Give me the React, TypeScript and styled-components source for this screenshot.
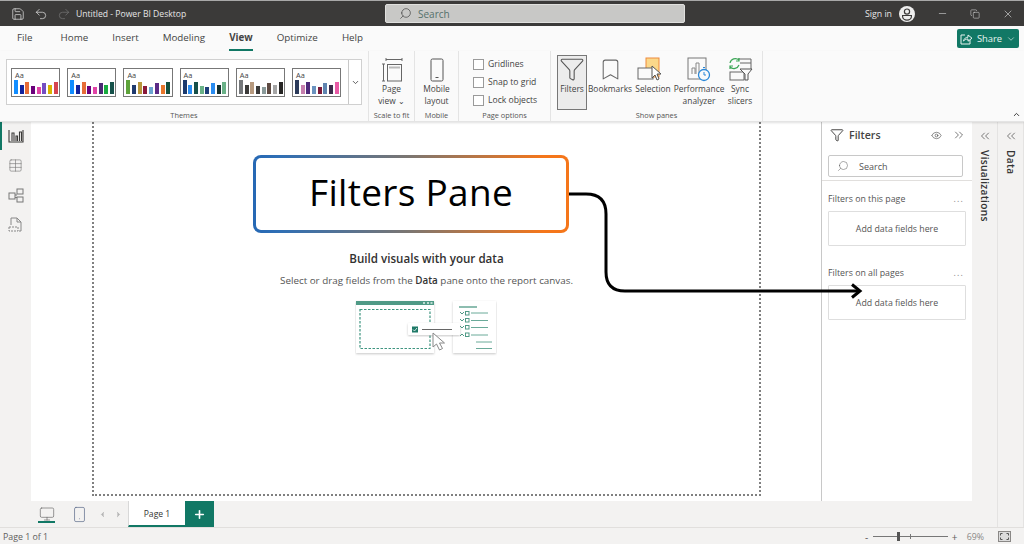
import React from 'react';
import styled, { createGlobalStyle } from 'styled-components';
import { Save, Undo2, Redo2, Search, Minus, Copy, X, ChevronDown, ChevronUp, ChevronsLeft, ChevronsRight, Eye, ChevronLeft, ChevronRight, Plus, Bookmark, Filter, Monitor, Smartphone, Table } from 'lucide-react';

const GlobalStyle = createGlobalStyle`
  html, body {
    margin: 0;
    height: 544px;
    overflow: hidden;
    background: #fff;
    font-family: "Open Sans", "Noto Sans", sans-serif;
    color: #323130;
  }
  * { box-sizing: border-box; }
`;

const Shell = styled.div`
  position: relative;
  width: 1024px;
  height: 544px;
  display: flex;
  flex-direction: column;
  overflow: hidden;
`;

// Barra de titulo
const TitleBar = styled.div`
  height: 26px;
  flex: none;
  background: #3b3a39;
  border-top: 1px solid #a8a8a8;
  display: flex;
  align-items: center;
  padding-left: 11px;
  color: #e6e6e6;
`;

const QuickIcons = styled.div`
  display: flex;
  align-items: center;
  gap: 9px;
  width: 65px;
`;

const AppTitle = styled.div`
  font-size: 8.6px;
  width: 309px;
  white-space: nowrap;
`;

const SearchBar = styled.div`
  width: 300px;
  height: 19px;
  background: #c8c8c6;
  border: 1px solid #e0e0de;
  border-radius: 2px;
  display: flex;
  align-items: center;
  gap: 6px;
  padding-left: 13px;
  font-size: 10px;
  color: #55706b;
`;

const SignIn = styled.div`
  margin-left: auto;
  display: flex;
  align-items: center;
  gap: 7px;
  font-size: 8.8px;
  margin-right: 22px;
`;

const WindowButtons = styled.div`
  display: flex;
  align-items: center;
  gap: 22px;
  margin-right: 10px;
`;

// Pestanas
const TabRow = styled.div`
  height: 25px;
  flex: none;
  background: #fafafa;
  display: flex;
  align-items: center;
  padding: 0 5px 0 17px;
`;

const Tab = styled.div<{ $active?: boolean; $gap?: number }>`
  font-size: 9.8px;
  margin-right: ${p => p.$gap ?? 24}px;
  height: 25px;
  line-height: 24px;
  color: #444;
  font-weight: ${p => (p.$active ? 700 : 400)};
  border-bottom: 2px solid ${p => (p.$active ? '#117865' : 'transparent')};
`;

const ShareButton = styled.div`
  margin-left: auto;
  width: 62px;
  height: 19px;
  background: #117865;
  border-radius: 2px;
  color: #e8f3f0;
  font-size: 9.4px;
  display: flex;
  align-items: center;
  justify-content: center;
  gap: 4px;
`;

// Cinta
const Ribbon = styled.div`
  position: relative;
  height: 71px;
  flex: none;
  background: #fafafa;
  border-bottom: 1px solid #e4e4e4;
  box-shadow: 0 1px 2px rgba(0, 0, 0, 0.12);
  display: flex;
  z-index: 1;
`;

const Group = styled.div<{ $w: number }>`
  width: ${p => p.$w}px;
  flex: none;
  display: flex;
  flex-direction: column;
  align-items: center;
  border-right: 1px solid #e4e4e4;
`;

const GroupBody = styled.div`
  flex: 1;
  min-height: 0;
  width: 100%;
  display: flex;
  justify-content: center;
`;

const GroupLabel = styled.div`
  font-size: 7.4px;
  line-height: 11px;
  color: #555;
  white-space: nowrap;
`;

const Gallery = styled.div`
  width: 356px;
  height: 46px;
  margin-top: 8px;
  border: 1px solid #d0d0d0;
  background: #fff;
  display: flex;
  align-items: center;
  padding-left: 4px;
  gap: 7px;
`;

const ThemeThumb = styled.div`
  width: 50px;
  height: 29px;
  border: 1px solid #777;
  background: #fff;
  padding: 2px 2px 0 3px;
  position: relative;
`;

const ThumbLabel = styled.div`
  font-size: 7.4px;
  line-height: 8px;
  color: #444;
`;

const Bars = styled.div`
  position: absolute;
  left: 2px;
  bottom: 2px;
  display: flex;
  align-items: flex-end;
  gap: 1.7px;
`;

const Bar = styled.div<{ $h: number; $c: string }>`
  width: 4px;
  height: ${p => p.$h}px;
  background: ${p => p.$c};
`;

const GalleryMore = styled.div`
  margin-left: auto;
  width: 13px;
  height: 100%;
  border-left: 1px solid #c8c8c8;
  display: flex;
  align-items: center;
  justify-content: center;
  color: #555;
`;

const RibbonButton = styled.div<{ $w: number; $pressed?: boolean }>`
  width: ${p => p.$w}px;
  height: 55px;
  margin-top: 4px;
  display: flex;
  flex-direction: column;
  align-items: center;
  font-size: 8.4px;
  line-height: 12px;
  color: #444;
  text-align: center;
  white-space: nowrap;
  background: ${p => (p.$pressed ? '#ececec' : 'transparent')};
  border: 1px solid ${p => (p.$pressed ? '#777' : 'transparent')};
`;

const IconSlot = styled.div`
  height: 26px;
  margin-bottom: 1px;
  display: flex;
  align-items: flex-end;
  justify-content: center;
`;

const CheckList = styled.div`
  display: flex;
  flex-direction: column;
  gap: 6px;
  padding: 7px 0 0 14px;
  width: 100%;
`;

const CheckRow = styled.div`
  display: flex;
  align-items: center;
  gap: 4px;
  font-size: 8.6px;
  height: 12px;
  color: #444;
`;

const CheckBox = styled.div`
  width: 11px;
  height: 11px;
  border: 1px solid #9a9a9a;
  background: #fff;
`;

const ButtonRow = styled.div`
  display: flex;
  padding-left: 6px;
  width: 100%;
`;

const Collapse = styled.div`
  position: absolute;
  right: 3px;
  bottom: 2px;
  color: #333;
  display: flex;
`;

// Area principal
const Main = styled.div`
  flex: 1;
  display: flex;
  min-height: 0;
`;

const CenterColumn = styled.div`
  width: 972px;
  display: flex;
  flex-direction: column;
`;

const WorkRow = styled.div`
  flex: 1;
  display: flex;
  min-height: 0;
`;

const Rail = styled.div`
  width: 31px;
  flex: none;
  background: #f3f2f1;
  display: flex;
  flex-direction: column;
  align-items: center;
`;

const RailItem = styled.div<{ $active?: boolean }>`
  width: 100%;
  height: ${p => (p.$active ? 28 : 30)}px;
  display: flex;
  align-items: center;
  justify-content: center;
  color: ${p => (p.$active ? '#3b3a39' : '#777')};
  border-left: 2.5px solid ${p => (p.$active ? '#117865' : 'transparent')};
  padding-right: 2px;
`;

const Canvas = styled.div`
  width: 790px;
  flex: none;
  padding: 0 60px 5px 61px;
  background: #fff;
`;

const ReportPage = styled.div`
  height: 100%;
  border: 2px dotted #808080;
  border-top: none;
  display: flex;
  flex-direction: column;
  align-items: center;
  padding-top: 33px;
`;

const Callout = styled.div`
  width: 316px;
  height: 78px;
  margin-right: 31px;
  padding-bottom: 6px;
  border: 3px solid transparent;
  border-radius: 8px;
  background: linear-gradient(#fff, #fff) padding-box,
    linear-gradient(90deg, #2668b4, #2f6fb5 8%, #7d7670 50%, #f5761a 92%, #f5761a) border-box;
  font-size: 37px;
  color: #000;
  display: flex;
  align-items: center;
  justify-content: center;
  letter-spacing: 0.3px;
`;

const EmptyTitle = styled.div`
  margin-top: 17px;
  font-size: 11.6px;
  line-height: 18px;
  font-weight: 600;
  color: #323130;
`;

const EmptyText = styled.div`
  margin-top: 5px;
  font-size: 9.85px;
  line-height: 14px;
  color: #555;
  b { font-weight: 600; color: #333; }
`;

const Illustration = styled.div`
  margin: 13px 2px 0 0;
  display: flex;
`;

// Panel de filtros
const FilterPane = styled.div`
  width: 151px;
  flex: none;
  background: #fff;
  border-left: 1px solid #c8c8c8;
  display: flex;
  flex-direction: column;
`;

const PaneHeader = styled.div`
  height: 26px;
  display: flex;
  align-items: center;
  padding: 0 6px 0 8px;
  color: #444;
`;

const PaneTitle = styled.div`
  font-size: 10.6px;
  font-weight: 600;
  margin-left: 5px;
  flex: 1;
`;

const PaneSearch = styled.div`
  margin: 7px 0 0 6px;
  width: 135px;
  height: 22px;
  border: 1px solid #c8c8c8;
  border-radius: 2px;
  display: flex;
  align-items: center;
  gap: 10px;
  padding-left: 8px;
  font-size: 9px;
  color: #555;
`;

const PaneDivider = styled.div`
  height: 1px;
  background: #e1dfdd;
  margin-top: 3px;
`;

const SectionHead = styled.div<{ $top: number }>`
  margin: ${p => p.$top}px 8px 0 6px;
  display: flex;
  justify-content: space-between;
  align-items: center;
  font-size: 8.8px;
  line-height: 12px;
  color: #555;
`;

const MoreDots = styled.span`
  letter-spacing: 1.2px;
  color: #888;
`;

const DropWell = styled.div`
  margin: 6px 0 0 6px;
  width: 138px;
  height: 35px;
  border: 1px solid #dedede;
  border-radius: 1px;
  display: flex;
  align-items: center;
  justify-content: center;
  font-size: 8.8px;
  color: #555;
`;

const SideTab = styled.div<{ $w: number }>`
  width: ${p => p.$w}px;
  flex: none;
  background: #f3f2f1;
  border-right: 1px solid #e4e3e2;
  display: flex;
  flex-direction: column;
  align-items: center;
  padding-top: 7px;
  color: #444;
`;

const SideLabel = styled.div`
  writing-mode: vertical-rl;
  font-size: 10.2px;
  font-weight: 600;
  color: #333;
  margin-top: 7px;
  letter-spacing: 0.3px;
`;

// Barra de paginas
const PageBar = styled.div`
  height: 26px;
  flex: none;
  background: #f3f2f1;
  display: flex;
  align-items: stretch;
  padding-left: 31px;
`;

const ViewToggle = styled.div<{ $active?: boolean; $w: number }>`
  width: ${p => p.$w}px;
  display: flex;
  align-items: center;
  justify-content: center;
  color: #666;
  position: relative;
  &::after {
    content: '';
    display: ${p => (p.$active ? 'block' : 'none')};
    position: absolute;
    left: 7px;
    right: 8px;
    bottom: 4px;
    height: 2px;
    background: #117865;
  }
`;

const PageNav = styled.div`
  display: flex;
  align-items: center;
  gap: 7px;
  width: 32px;
  padding-left: 2px;
  color: #b4b4b4;
`;

const PageTab = styled.div`
  width: 57px;
  padding-top: 2px;
  background: #fff;
  border-left: 1px solid #d8d8d8;
  border-bottom: 2px solid #117865;
  font-size: 8.6px;
  display: flex;
  align-items: center;
  justify-content: center;
  color: #333;
`;

const AddPage = styled.div`
  width: 29px;
  background: #117865;
  color: #fff;
  display: flex;
  align-items: center;
  justify-content: center;
`;

// Barra de estado
const StatusBar = styled.div`
  height: 17px;
  flex: none;
  background: #f3f2f1;
  border-top: 1px solid #e1dfdd;
  display: flex;
  align-items: center;
  padding: 1px 13px 0 3px;
  font-size: 8.8px;
  color: #605e5c;
`;

const ZoomBox = styled.div`
  margin-left: auto;
  display: flex;
  align-items: center;
`;

const ZoomSign = styled.span`
  font-size: 10px;
  line-height: 10px;
  width: 6px;
  text-align: center;
`;

const Slider = styled.div`
  position: relative;
  width: 75px;
  height: 1px;
  margin: 0 4px 0 3px;
  background: #777;
`;

const SliderThumb = styled.div`
  position: absolute;
  left: 24px;
  top: -4px;
  width: 3px;
  height: 9px;
  background: #555;
`;

const SliderTick = styled.div`
  position: absolute;
  left: 37px;
  top: -2px;
  width: 1px;
  height: 5px;
  background: #777;
`;

const ZoomValue = styled.span`
  margin: 0 14px 0 9px;
  color: #8a8886;
`;

const ArrowLayer = styled.svg`
  position: absolute;
  left: 0;
  top: 0;
  pointer-events: none;
  z-index: 2;
`;

const THEMES = [
  ['#118dff', '#12239e', '#e66c37', '#6b007b', '#e044a7', '#744ec2', '#d9b300', '#d64550'],
  ['#118dff', '#12239e', '#e66c37', '#6b007b', '#e044a7', '#4b2a74', '#1aab40', '#15514a'],
  ['#5ea33a', '#1f3a6e', '#b8963c', '#8a1a3a', '#6aa3d0', '#5b2a86', '#e8762c', '#15503f'],
  ['#1b3a6e', '#2a8cf0', '#17504a', '#6ab187', '#1d3f7a', '#2a8cf0', '#15302f', '#6ab187'],
  ['#75787b', '#3b3a39', '#b79a7f', '#3b3a39', '#8a9a9a', '#5e4a42', '#a5a5a5', '#252423'],
  ['#2b3a5a', '#c67fae', '#4e2a7a', '#6b93bf', '#7b1a3a', '#6085b0', '#3b2a4a', '#e85aa5'],
];
const BAR_HEIGHTS = [14, 9, 12, 8, 7, 11, 9, 12];

const PageViewIcon = () => (
  <svg width="22" height="24" viewBox="0 0 22 24" fill="none" stroke="#666" strokeWidth="1">
    <path d="M5 1.500h16M5 0v3M21 0v3M1 6h3M1 23h3M2.500 6v17" />
    <rect x="6.500" y="6.500" width="14" height="16.500" />
    <rect x="8" y="8.500" width="11" height="2" fill="#b8b8b8" stroke="none" />
  </svg>
);

const MobileIcon = () => (
  <svg width="14" height="24" viewBox="0 0 14 24" fill="none" stroke="#555" strokeWidth="1">
    <rect x="1" y="1" width="12" height="22" rx="1.500" />
    <path d="M5.500 19.500h3" />
  </svg>
);

const SelectionIcon = () => (
  <svg width="32" height="25" viewBox="0 0 32 25" fill="none">
    <rect x="9" y="1" width="13" height="19" fill="#fbd88a" stroke="#ee8a3c" />
    <rect x="1" y="11" width="15" height="11" fill="#fafafa" stroke="#666" />
    <path d="M15 9l0 12 3-3 2 5 2-1-2-5 4 0z" fill="#fff" stroke="#555" />
  </svg>
);

const PerfIcon = () => (
  <svg width="24" height="25" viewBox="0 0 24 25" fill="none">
    <rect x="1" y="1" width="18" height="21" stroke="#777" />
    <path d="M5 17v-6h3v6M9 17V6h3v11" stroke="#888" />
    <circle cx="17" cy="18" r="5.500" fill="#fafafa" stroke="#2b88d8" strokeWidth="1.300" />
    <path d="M17 15v3h2M16 10.500h2" stroke="#2b88d8" />
  </svg>
);

const SyncIcon = () => (
  <svg width="25" height="25" viewBox="0 0 25 25" fill="none">
    <path d="M10 2h13v11M12 6h11" stroke="#666" />
    <rect x="2" y="15" width="14" height="8" stroke="#666" fill="#fafafa" />
    <path d="M12 12h12l-4 5v6h-3v-6z" fill="#fafafa" stroke="#555" />
    <path d="M2 6a5.500 5.500 0 0 1 9-3M11 8a5.500 5.500 0 0 1-9 2M11 1v3H8M2 12V9h3" stroke="#3aa655" strokeWidth="1.200" />
  </svg>
);

const BarsIcon = () => (
  <svg width="16" height="14" viewBox="0 0 16 14" fill="none" stroke="#3b3a39" strokeWidth="1.100">
    <path d="M1 1v12h14V1M4 12V4h2v8M8 12V7h1.500v5M11.500 12V3h2v9" />
  </svg>
);

const ModelIcon = () => (
  <svg width="16" height="15" viewBox="0 0 16 15" fill="none" stroke="#777" strokeWidth="1">
    <rect x="1" y="5" width="6" height="6" />
    <rect x="9" y="1" width="6" height="5" />
    <rect x="9" y="9" width="6" height="5" />
    <path d="M7 7h2M7 9.500h2" />
  </svg>
);

const DaxIcon = () => (
  <svg width="15" height="16" viewBox="0 0 15 16" fill="none" stroke="#888" strokeWidth="1">
    <path d="M3 8V1h6l4 4v9h-2M9 1v4h4" />
    <path d="M1 10h9v4H1z" strokeDasharray="2 1" />
  </svg>
);

const AccountIcon = () => (
  <svg width="16" height="16" viewBox="0 0 16 16">
    <circle cx="8" cy="8" r="8" fill="#eee" />
    <circle cx="8" cy="5.600" r="2.600" fill="none" stroke="#3b3a39" strokeWidth="1.200" />
    <path d="M3.600 9.500h8.800v1a4.400 3.600 0 0 1-8.800 0z" fill="none" stroke="#3b3a39" strokeWidth="1.200" />
  </svg>
);

const ShareIcon = () => (
  <svg width="13" height="12" viewBox="0 0 13 12" fill="none" stroke="#e8f3f0" strokeWidth="1">
    <path d="M5 2H1v9h9V7" />
    <path d="M3.500 8C4 5.500 6 4.200 8 4.200V2l4 3.200-4 3V6C6 6 5 6.700 3.500 8z" />
  </svg>
);

const FitIcon = () => (
  <svg width="13" height="11" viewBox="0 0 13 11" fill="none">
    <rect x="0.500" y="0.500" width="12" height="10" fill="#dcdcdc" stroke="#8a8886" />
    <path d="M2.500 4.500v-2h2M8.500 2.500h2v2M10.500 6.500v2h-2M4.500 8.500h-2v-2" stroke="#555" />
  </svg>
);

const DeskIllustration = () => (
  <svg width="142" height="56" viewBox="0 0 142 56">
    <defs>
      <filter id="soft" x="-10%" y="-10%" width="120%" height="125%">
        <feDropShadow dx="0" dy="1" stdDeviation="1.200" floodColor="#000" floodOpacity="0.22" />
      </filter>
    </defs>
    <rect x="1" y="1" width="78" height="52" fill="#fff" filter="url(#soft)" />
    <rect x="1" y="1" width="78" height="4" fill="#4f9a86" />
    <path d="M68 3h2M72 3h2M75.500 3h2" stroke="#e0efea" strokeWidth="1.500" />
    <rect x="5" y="9.500" width="70" height="39" fill="none" stroke="#3f9580" strokeWidth="1.200" strokeDasharray="2.500 1.500" />
    <rect x="98" y="1" width="43" height="52" fill="#fff" filter="url(#soft)" />
    <path d="M104 7h18" stroke="#4f9a86" strokeWidth="1.300" />
    <path d="M116 13h17M116 20.500h17M116 27.500h17M116 35h17M121 42h16M121 48.500h16" stroke="#6aaa99" strokeWidth="1" />
    <path d="M105 12l2 2 2-2M105 19l2 2 2-2M105 26l2 2 2-2M105 36l2-2 2 2" fill="none" stroke="#4f9a86" />
    <rect x="110.500" y="11.500" width="3.500" height="3.500" fill="none" stroke="#4f9a86" />
    <rect x="110.500" y="18.500" width="3.500" height="3.500" fill="none" stroke="#4f9a86" />
    <rect x="110.500" y="25.500" width="3.500" height="3.500" fill="none" stroke="#4f9a86" />
    <rect x="110.500" y="33" width="3.500" height="3.500" fill="none" stroke="#4f9a86" />
    <rect x="53" y="23" width="52" height="12" rx="1" fill="#fff" filter="url(#soft)" />
    <rect x="57" y="26.500" width="6" height="6" fill="#1f7a68" />
    <path d="M58 29.500l1.500 1.500 2.500-3" fill="none" stroke="#fff" strokeWidth="0.800" />
    <path d="M67 29.500h30" stroke="#666" strokeWidth="1" />
    <path d="M78 33l0 14 3.500-3 3 6 3-1.500-3-5.500h5z" fill="#fff" stroke="#888" strokeWidth="1" />
  </svg>
);

const App: React.FC = () => {
  return (
    <Shell>
      <GlobalStyle />
      <TitleBar>
        <QuickIcons>
          <Save size={14} strokeWidth={1.2} />
          <Undo2 size={14} strokeWidth={1.2} />
          <Redo2 size={14} strokeWidth={1.2} color="#777" />
        </QuickIcons>
        <AppTitle>Untitled - Power BI Desktop</AppTitle>
        <SearchBar>
          <Search size={13} strokeWidth={1.3} color="#444" style={{ transform: 'scaleX(-1)' }} />
          Search
        </SearchBar>
        <SignIn>
          Sign in
          <AccountIcon />
        </SignIn>
        <WindowButtons>
          <Minus size={11} strokeWidth={1.2} />
          <Copy size={10} strokeWidth={1.2} />
          <X size={12} strokeWidth={1.2} />
        </WindowButtons>
      </TitleBar>

      <TabRow>
        <Tab $gap={28}>File</Tab>
        <Tab>Home</Tab>
        <Tab>Insert</Tab>
        <Tab>Modeling</Tab>
        <Tab $active>View</Tab>
        <Tab>Optimize</Tab>
        <Tab>Help</Tab>
        <ShareButton>
          <ShareIcon />
          Share
          <ChevronDown size={10} strokeWidth={1.5} />
        </ShareButton>
      </TabRow>

      <Ribbon>
        <Group $w={369}>
          <GroupBody>
            <Gallery>
              {THEMES.map((colors, i) => (
                <ThemeThumb key={i}>
                  <ThumbLabel>Aa</ThumbLabel>
                  <Bars>
                    {colors.map((c, j) => (
                      <Bar key={j} $c={c} $h={BAR_HEIGHTS[j]} />
                    ))}
                  </Bars>
                </ThemeThumb>
              ))}
              <GalleryMore>
                <ChevronDown size={9} strokeWidth={2.5} />
              </GalleryMore>
            </Gallery>
          </GroupBody>
          <GroupLabel>Themes</GroupLabel>
        </Group>
        <Group $w={46}>
          <GroupBody>
            <RibbonButton $w={44}>
              <IconSlot><PageViewIcon /></IconSlot>
              <span>Page</span>
              <span>view ⌄</span>
            </RibbonButton>
          </GroupBody>
          <GroupLabel>Scale to fit</GroupLabel>
        </Group>
        <Group $w={44}>
          <GroupBody>
            <RibbonButton $w={40}>
              <IconSlot><MobileIcon /></IconSlot>
              <span>Mobile</span>
              <span>layout</span>
            </RibbonButton>
          </GroupBody>
          <GroupLabel>Mobile</GroupLabel>
        </Group>
        <Group $w={92}>
          <GroupBody>
            <CheckList>
              <CheckRow><CheckBox />Gridlines</CheckRow>
              <CheckRow><CheckBox />Snap to grid</CheckRow>
              <CheckRow><CheckBox />Lock objects</CheckRow>
            </CheckList>
          </GroupBody>
          <GroupLabel>Page options</GroupLabel>
        </Group>
        <Group $w={212}>
          <GroupBody>
            <ButtonRow>
              <RibbonButton $w={30} $pressed>
                <IconSlot><Filter size={26} strokeWidth={1} color="#555" /></IconSlot>
                <span>Filters</span>
              </RibbonButton>
              <RibbonButton $w={46}>
                <IconSlot><Bookmark size={25} strokeWidth={1} color="#666" /></IconSlot>
                <span>Bookmarks</span>
              </RibbonButton>
              <RibbonButton $w={40}>
                <IconSlot><SelectionIcon /></IconSlot>
                <span>Selection</span>
              </RibbonButton>
              <RibbonButton $w={52}>
                <IconSlot><PerfIcon /></IconSlot>
                <span>Performance</span>
                <span>analyzer</span>
              </RibbonButton>
              <RibbonButton $w={30}>
                <IconSlot><SyncIcon /></IconSlot>
                <span>Sync</span>
                <span>slicers</span>
              </RibbonButton>
            </ButtonRow>
          </GroupBody>
          <GroupLabel>Show panes</GroupLabel>
        </Group>
        <Collapse>
          <ChevronUp size={9} strokeWidth={2.5} />
        </Collapse>
      </Ribbon>

      <Main>
        <CenterColumn>
          <WorkRow>
            <Rail>
              <RailItem $active><BarsIcon /></RailItem>
              <RailItem><Table size={15} strokeWidth={1} /></RailItem>
              <RailItem><ModelIcon /></RailItem>
              <RailItem><DaxIcon /></RailItem>
            </Rail>
            <Canvas>
              <ReportPage>
                <Callout>Filters Pane</Callout>
                <EmptyTitle>Build visuals with your data</EmptyTitle>
                <EmptyText>
                  Select or drag fields from the <b>Data</b> pane onto the report canvas.
                </EmptyText>
                <Illustration>
                  <DeskIllustration />
                </Illustration>
              </ReportPage>
            </Canvas>
            <FilterPane>
              <PaneHeader>
                <Filter size={14} strokeWidth={1.6} color="#3b3a39" />
                <PaneTitle>Filters</PaneTitle>
                <Eye size={11} strokeWidth={1.3} style={{ marginRight: 10 }} />
                <ChevronsRight size={14} strokeWidth={1.2} />
              </PaneHeader>
              <PaneSearch>
                <Search size={12} strokeWidth={1} style={{ transform: 'scaleX(-1)' }} />
                Search
              </PaneSearch>
              <PaneDivider />
              <SectionHead $top={12}>
                <span>Filters on this page</span>
                <MoreDots>...</MoreDots>
              </SectionHead>
              <DropWell>Add data fields here</DropWell>
              <SectionHead $top={21}>
                <span>Filters on all pages</span>
                <MoreDots>...</MoreDots>
              </SectionHead>
              <DropWell>Add data fields here</DropWell>
            </FilterPane>
          </WorkRow>
          <PageBar>
            <ViewToggle $w={32} $active><Monitor size={16} strokeWidth={1} /></ViewToggle>
            <ViewToggle $w={33}><Smartphone size={17} strokeWidth={1} color="#5a6a8a" /></ViewToggle>
            <PageNav>
              <ChevronLeft size={9} strokeWidth={2} fill="#b4b4b4" />
              <ChevronRight size={9} strokeWidth={2} fill="#b4b4b4" />
            </PageNav>
            <PageTab>Page 1</PageTab>
            <AddPage><Plus size={13} strokeWidth={3} /></AddPage>
          </PageBar>
        </CenterColumn>
        <SideTab $w={26}>
          <ChevronsLeft size={14} strokeWidth={1.2} />
          <SideLabel>Visualizations</SideLabel>
        </SideTab>
        <SideTab $w={26}>
          <ChevronsLeft size={14} strokeWidth={1.2} />
          <SideLabel>Data</SideLabel>
        </SideTab>
      </Main>

      <StatusBar>
        Page 1 of 1
        <ZoomBox>
          <ZoomSign>-</ZoomSign>
          <Slider>
            <SliderThumb />
            <SliderTick />
          </Slider>
          <ZoomSign>+</ZoomSign>
          <ZoomValue>69%</ZoomValue>
          <FitIcon />
        </ZoomBox>
      </StatusBar>

      <ArrowLayer width="1024" height="544" viewBox="0 0 1024 544" fill="none">
        <path d="M569 194H586Q606 194 606 214V272Q606 291 625 291H859" stroke="#000" strokeWidth="3" />
        <path d="M852 284.500L860 291L852 297.500" stroke="#000" strokeWidth="3" />
      </ArrowLayer>
    </Shell>
  );
};

export default App;
